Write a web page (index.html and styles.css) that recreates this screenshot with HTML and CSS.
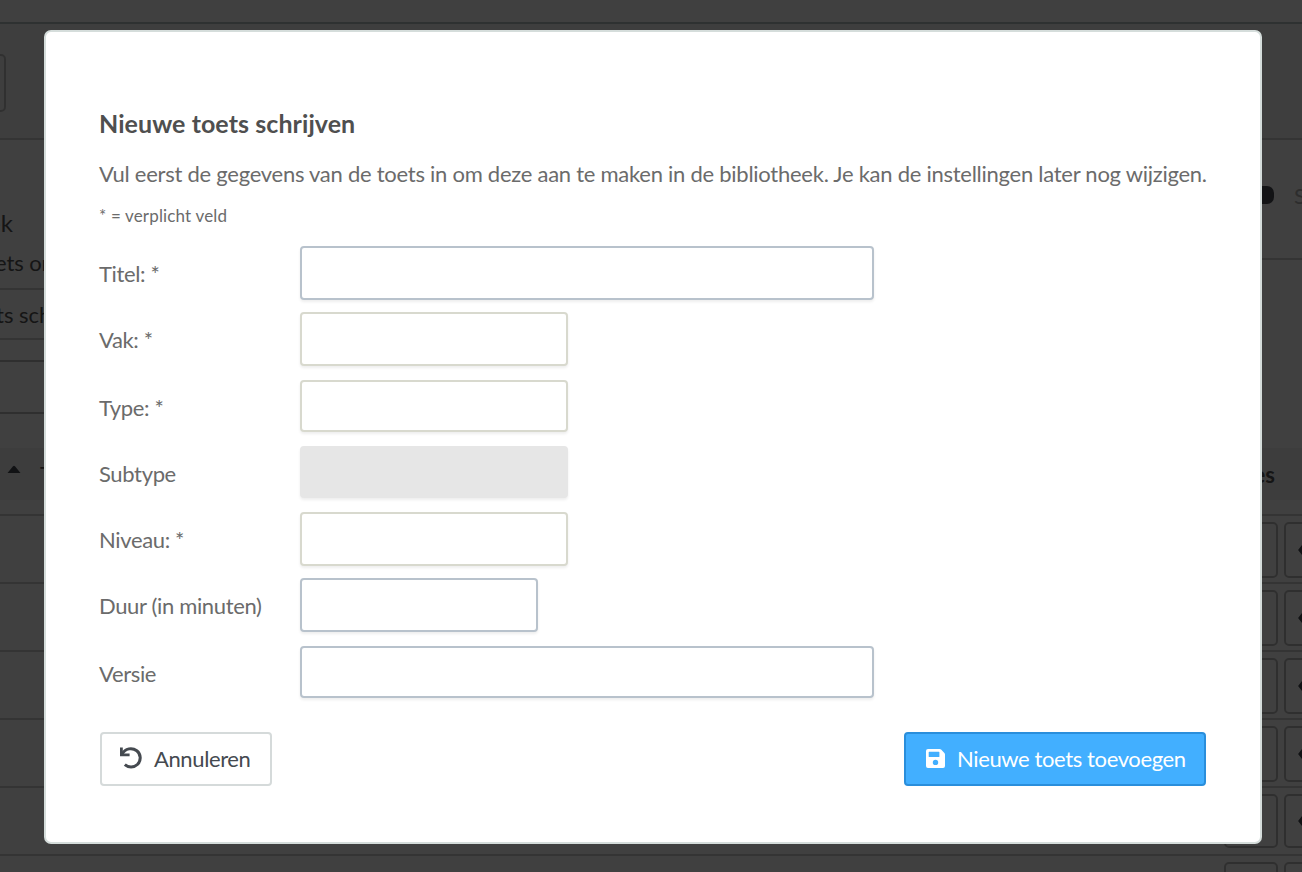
FILE: index.html
```
<!DOCTYPE html>
<html lang="nl">
<head>
	<meta charset="utf-8">
	<title>Nieuwe toets schrijven</title>
	<link rel="stylesheet" href="styles.css">
</head>
<body>
	<div class="page">
		<div class="topbar"></div>
		<div class="toolbar"><span class="toolbar-btn"></span></div>
		<div class="main">
			<div class="side">
				<div class="side-title">ek</div>
				<div class="side-text">ets or</div>
				<div class="side-item">ts sch</div>
				<div class="side-search"></div>
			</div>
			<div class="status">
				<div class="status-row"><span class="toggle"></span><span class="off">S</span></div>
			</div>
		</div>
		<div class="table-head">
			<svg class="sort" width="14" height="9" viewBox="0 0 14 9"><path d="M.5 8 L6 1.3 Q7 .3 8 1.3 L13.5 8 Z" fill="#454a50"/></svg>
			<span class="col">T</span>
			<span class="col-end">es</span>
		</div>
		<div class="table">
			<div class="row"><span class="box"></span><span class="box"><svg width="16" height="12" viewBox="0 0 16 12"><path d="M7 1 L3 6 L7 11" /></svg></span></div>
			<div class="row"><span class="box"></span><span class="box"><svg width="16" height="12" viewBox="0 0 16 12"><path d="M7 1 L3 6 L7 11" /></svg></span></div>
			<div class="row"><span class="box"></span><span class="box"><svg width="16" height="12" viewBox="0 0 16 12"><path d="M7 1 L3 6 L7 11" /></svg></span></div>
			<div class="row"><span class="box"></span><span class="box"><svg width="16" height="12" viewBox="0 0 16 12"><path d="M7 1 L3 6 L7 11" /></svg></span></div>
			<div class="row"><span class="box short"></span><span class="box short"><svg width="16" height="12" viewBox="0 0 16 12"><path d="M7 1 L3 6 L7 11" /></svg></span></div>
			<div class="row"><span class="box"></span><span class="box"></span></div>
		</div>
	</div>

	<div class="overlay">
		<div class="modal">
			<h1>Nieuwe toets schrijven</h1>
			<p class="intro">Vul eerst de gegevens van de toets in om deze aan te maken in de bibliotheek. Je kan de instellingen later nog wijzigen.</p>
			<p class="required">* = verplicht veld</p>
			<form class="form">
				<label for="titel">Titel: *</label>
				<input id="titel" class="wide" type="text">
				<label for="vak">Vak: *</label>
				<input id="vak" class="select" type="text">
				<label for="type">Type: *</label>
				<input id="type" class="select low" type="text">
				<label for="subtype">Subtype</label>
				<input id="subtype" class="select low disabled" type="text" disabled>
				<label for="niveau">Niveau: *</label>
				<input id="niveau" class="select" type="text">
				<label for="duur">Duur (in minuten)</label>
				<input id="duur" class="small" type="text">
				<label for="versie">Versie</label>
				<input id="versie" class="wide low" type="text">
			</form>
			<div class="actions">
				<button type="button" class="btn btn-cancel">
					<svg width="22" height="22" viewBox="0 0 22 22"><path d="M2.2 6.9 C5.2 1.2 12.2 .3 16.8 3.7 C21.2 7.1 21.3 13.8 17.4 17.5 C13.8 20.9 8.4 20.8 4.8 17.7" fill="none" stroke="#454a50" stroke-width="3"/><path d="M0 .5 H2.8 V6.4 H9.6 V9.3 H0 Z" fill="#454a50"/></svg>
					<span>Annuleren</span>
				</button>
				<button type="button" class="btn btn-save">
					<svg width="19" height="19" viewBox="0 0 19 19"><path fill="#fff" fill-rule="evenodd" d="M2 0 H13.6 Q14.5 0 15.1 .6 L18.4 3.9 Q19 4.5 19 5.4 V17 Q19 19 17 19 H2 Q0 19 0 17 V2 Q0 0 2 0 Z M3.2 2.7 H12.9 Q13.4 2.7 13.4 3.2 V7.4 Q13.4 8 12.8 8 H3.3 Q2.7 8 2.7 7.4 V3.2 Q2.7 2.7 3.2 2.7 Z M9.5 10.7 A2.7 2.7 0 1 0 9.5 16.1 A2.7 2.7 0 1 0 9.5 10.7 Z"/></svg>
					<span>Nieuwe toets toevoegen</span>
				</button>
			</div>
		</div>
	</div>
</body>
</html>
```
FILE: styles.css
```
*{
	box-sizing: border-box;
}
body{
	margin: 0;
	height: 872px;
	overflow: hidden;
	font-family: Lato, "Open Sans", sans-serif;
	font-size: 22px;
	color: #6b6b6b;
}

/* page behind the dialog */
.page{
	height: 872px;
	overflow: hidden;
	background-color: #fff;
	color: #555;
}
.topbar{
	height: 24px;
	border-bottom: 2px solid #b8c4c4;
}
.toolbar{
	height: 116px;
	padding-top: 30px;
	background-color: #f6f6f6;
	border-bottom: 2px solid #d0d0d0;
}
.toolbar-btn{
	display: block;
	width: 12px;
	height: 58px;
	margin-left: -6px;
	border: 2px solid #c0c0c0;
	border-radius: 5px;
}
.main{
	display: flex;
	justify-content: space-between;
	height: 308px;
}
.side{
	width: 200px;
	padding-top: 68px;
	white-space: nowrap;
}
.side-title{
	height: 36px;
	margin-left: -12px;
	font-size: 24px;
	line-height: 30px;
}
.side-text{
	height: 46px;
	line-height: 37px;
	text-indent: -5px;
	letter-spacing: -0.1px;
	border-bottom: 2px solid #d0d0d0;
}
.side-item{
	height: 50px;
	line-height: 50px;
	text-indent: -4px;
	border-bottom: 2px solid #d0d0d0;
}
.side-search{
	height: 54px;
	margin-top: 20px;
	border: solid #bbb;
	border-width: 2px 0;
}
.status{
	width: 100px;
}
.status-row{
	display: flex;
	align-items: center;
	height: 120px;
	padding-bottom: 8px;
	border-bottom: 2px solid #d0d0d0;
}
.toggle{
	width: 34px;
	height: 18px;
	margin-left: 38px;
	border-radius: 7px;
	background-color: #484c54;
}
.off{
	margin-left: 20px;
	color: #b4b4b4;
}
.status .toggle{
	margin-left: 42px;
	flex: none;
	width: 30px;
}
.table-head{
	display: flex;
	align-items: center;
	height: 52px;
	background-color: #f4f4f4;
}
.sort{
	margin: -10px 0 0 7px;
}
.col{
	margin: -2px 0 0 19px;
}
.col-end{
	margin-left: auto;
	margin-right: 27px;
	font-weight: bold;
}
.table{
	padding-top: 14px;
}
.row{
	display: flex;
	gap: 6px;
	height: 68px;
	padding: 6px 0 0 1224px;
	border-top: 2px solid #d0d0d0;
}
.box{
	display: flex;
	align-items: center;
	flex: none;
	width: 54px;
	height: 56px;
	padding-left: 11px;
	border: 2px solid #bcbcbc;
	border-radius: 5px;
}
.box.short{
	height: 54px;
}
.box path{
	fill: none;
	stroke: #454a50;
	stroke-width: 3;
}

/* dialog */
.overlay{
	position: fixed;
	z-index: 10;
	left: 0;
	top: 0;
	width: 100vw;
	height: 100vh;
	padding: 30px 40px 28px 44px;
	background-color: rgba(0,0,0,0.75);
}
.modal{
	width: 1218px;
	height: 814px;
	padding: 73px 54px 0 53px;
	background-color: #fff;
	border: 2px solid #d5dddb;
	border-radius: 7px;
}
h1{
	margin: 0;
	height: 36px;
	line-height: 36px;
	font-size: 25px;
	letter-spacing: 0.07px;
	color: #4f4f4f;
}
.intro{
	margin: 15px 0 0;
	height: 36px;
	line-height: 36px;
	letter-spacing: -0.26px;
	white-space: nowrap;
}
.required{
	margin: 10px 0 0;
	height: 28px;
	line-height: 28px;
	font-size: 17px;
	letter-spacing: 0.16px;
}
.form{
	display: grid;
	grid-template-columns: 201px 1fr;
	grid-template-rows: 66px 68px 66px 66px 66px 68px 52px;
	align-items: start;
	margin-top: 16px;
}
.form label{
	line-height: 56px;
	letter-spacing: -0.35px;
	white-space: nowrap;
}
.form input{
	height: 54px;
	padding: 0 12px;
	font: inherit;
	background-color: #fff;
	border: 2px solid #b8c2cc;
	border-radius: 4px;
	box-shadow: 0 2px 3px rgba(0,0,0,0.07);
}
.form .wide{
	width: 574px;
}
.form .select{
	width: 268px;
	border-color: #d8d9ce;
}
.form .small{
	width: 238px;
}
.form .low{
	height: 52px;
}
.form .disabled{
	background-color: #e6e6e6;
	border-color: #e6e6e6;
}
.actions{
	display: flex;
	justify-content: space-between;
	margin: 34px 0 0 1px;
}
.btn{
	display: flex;
	align-items: center;
	height: 54px;
	padding: 0 0 2px 18px;
	font: inherit;
	letter-spacing: -0.38px;
	white-space: nowrap;
	border-radius: 4px;
}
.btn-cancel{
	width: 172px;
	gap: 12px;
	color: #454a50;
	background-color: #fff;
	border: 2px solid #d5dada;
}
.btn-save{
	width: 302px;
	gap: 12px;
	padding-left: 20px;
	color: #fff;
	background-color: #42afff;
	border: 2px solid #2a8edb;
}
```
